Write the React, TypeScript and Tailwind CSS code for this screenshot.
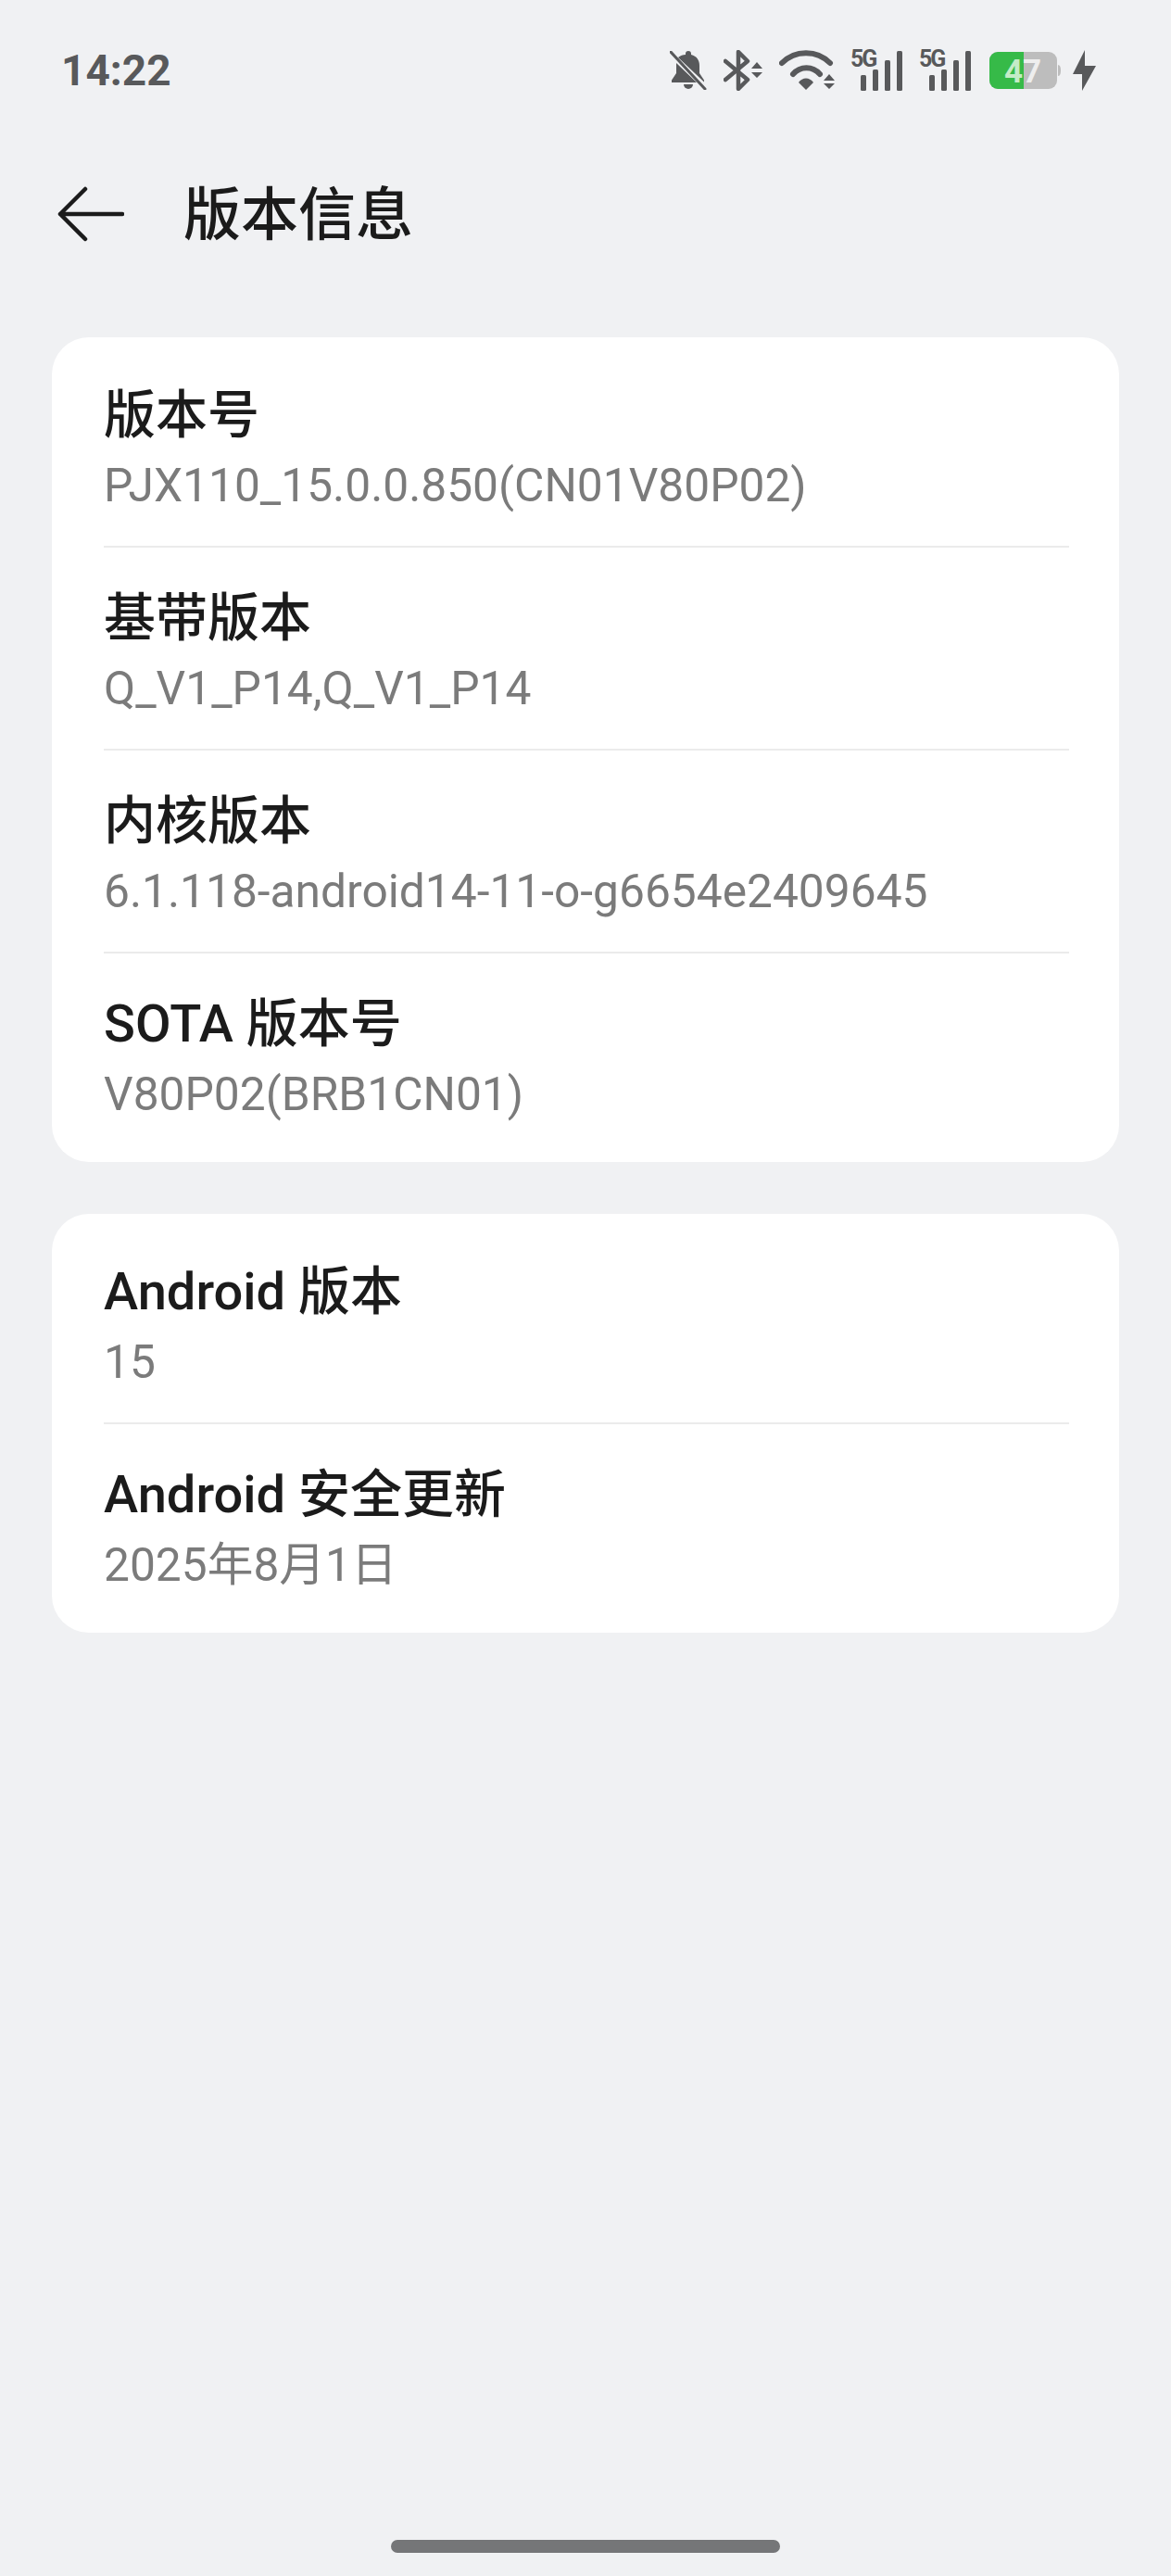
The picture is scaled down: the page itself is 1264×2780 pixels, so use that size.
const font = "font-['Roboto','Noto_Sans_CJK_SC',sans-serif]";

function BellOff() {
  return (
    <svg width="40" height="42" viewBox="0 0 40 42" fill="#58595b">
      <path d="M20 0a3 3 0 0 1 3 3v1c6 1.500 9 6 9 12v8l5 7.500v2L9 7c2.500-2 5-3 8-3V3a3 3 0 0 1 3-3z" />
      <path d="M7 13l22 21H2v-2.500l5-7.500z" />
      <path d="M15 36h10a5 5 0 0 1-10 0z" />
      <path d="M1 1l37 40" stroke="#58595b" strokeWidth="3" strokeLinecap="round" />
    </svg>
  );
}

function Bluetooth() {
  return (
    <svg width="42" height="44" viewBox="0 0 42 44" fill="none">
      <path
        d="M2 12l24 20-10 10V2l10 10L2 32"
        stroke="#58595b"
        strokeWidth="4.500"
        strokeLinejoin="round"
        strokeLinecap="round"
      />
      <path d="M36 13l6 7H30zM30 24h12l-6 6z" fill="#58595b" />
    </svg>
  );
}

function Wifi() {
  return (
    <svg width="60" height="44" viewBox="0 0 60 44" fill="none">
      <path d="M3 14c14-14.500 38-14.500 52 0" stroke="#58595b" strokeWidth="6" strokeLinecap="round" />
      <path d="M15 26c8-9 21-9 29 0" stroke="#58595b" strokeWidth="6" strokeLinecap="round" />
      <path d="M21 35c4-6 12-6 16 0l-8 8z" fill="#58595b" />
      <path d="M54 26l6 7H48zM48 36h12l-6 6z" fill="#58595b" />
    </svg>
  );
}

function Signal5G() {
  return (
    <svg width="56" height="44" viewBox="0 0 56 44" className="overflow-visible">
      <text
        x="0"
        y="18"
        fontFamily="Roboto, sans-serif"
        fontWeight="700"
        fontSize="25"
        letterSpacing="-2"
        fill="#58595b"
      >
        5G
      </text>
      <rect x="11" y="27" width="6" height="17" rx="1.500" fill="#58595b" />
      <rect x="24" y="21" width="6" height="23" rx="1.500" fill="#58595b" />
      <rect x="37" y="11" width="6" height="33" rx="1.500" fill="#58595b" />
      <rect x="50" y="1" width="6" height="43" rx="1.500" fill="#58595b" />
    </svg>
  );
}

function Battery() {
  return (
    <svg width="77" height="40" viewBox="0 0 77 40" className="overflow-visible">
      <defs>
        <clipPath id="leftPart">
          <rect x="0" y="0" width="37" height="40" />
        </clipPath>
        <clipPath id="rightPart">
          <rect x="37" y="0" width="40" height="40" />
        </clipPath>
      </defs>
      <rect x="0" y="0" width="73" height="40" rx="9" fill="#bdbdbd" />
      <rect x="0" y="0" width="73" height="40" rx="9" fill="#36ba48" clipPath="url(#leftPart)" />
      <path d="M74 14c2 0 3 2 3 6s-1 6-3 6z" fill="#bdbdbd" />
      <text
        x="16"
        y="33"
        fontFamily="Roboto, sans-serif"
        fontWeight="700"
        fontSize="35"
        fill="#c4ecc6"
        clipPath="url(#leftPart)"
      >
        47
      </text>
      <text
        x="16"
        y="33"
        fontFamily="Roboto, sans-serif"
        fontWeight="700"
        fontSize="35"
        fill="#eeeeee"
        clipPath="url(#rightPart)"
      >
        47
      </text>
    </svg>
  );
}

function Bolt() {
  return (
    <svg width="25" height="44" viewBox="0 0 25 44" fill="#58595b">
      <path d="M13 0v17h12L10 44v-18H0z" />
    </svg>
  );
}

function InfoRow({ title, value, last }: { title: string; value: string; last?: boolean }) {
  return (
    <>
      <div className="pt-[37px] pb-[28px] px-[56px]">
        <div className="text-[56px] leading-[76px] font-medium text-[#1b1b1b] pt-[1px] -mb-[1px]">{title}</div>
        <div className="text-[49.7px] leading-[76px] text-[#7b7b7b] pt-[1px] -mb-[1px]">{value}</div>
      </div>
      {!last && <div className="h-[2px] bg-[#ebebeb] ml-[56px] mr-[54px]" />}
    </>
  );
}

export default function App() {
  return (
    <div className={`${font} w-[1264px] h-[2780px] bg-[#f0f1f3] flex flex-col`}>
      {/* status bar */}
      <div className="h-[150px] flex items-center pl-[66px] pt-[2px]">
        <div className="text-[46px] font-bold text-[#58595b] leading-none w-[657px]">14:22</div>
        <div className="flex items-center">
          <div className="ml-0"><BellOff /></div>
          <div className="ml-[18px]"><Bluetooth /></div>
          <div className="ml-[18px]"><Wifi /></div>
          <div className="ml-[17px]"><Signal5G /></div>
          <div className="ml-[18px]"><Signal5G /></div>
          <div className="ml-[20px]"><Battery /></div>
          <div className="ml-[13px]"><Bolt /></div>
        </div>
      </div>

      {/* header */}
      <div className="h-[162px] flex items-center pl-[62px]">
        <svg width="72" height="60" viewBox="0 0 72 60" fill="none">
          <path
            d="M70 30H3M30 3L3 30l27 27"
            stroke="#1b1b1b"
            strokeWidth="4.500"
            strokeLinecap="round"
            strokeLinejoin="round"
          />
        </svg>
        <div className="ml-[64px] pt-[4px] text-[62px] font-medium text-[#1b1b1b] leading-none">版本信息</div>
      </div>

      <div className="mt-[52px] mx-[56px] flex flex-col gap-[56px]">
        <div className="bg-white rounded-[40px] py-[8px]">
          <InfoRow title="版本号" value="PJX110_15.0.0.850(CN01V80P02)" />
          <InfoRow title="基带版本" value="Q_V1_P14,Q_V1_P14" />
          <InfoRow title="内核版本" value="6.1.118-android14-11-o-g6654e2409645" />
          <InfoRow title="SOTA 版本号" value="V80P02(BRB1CN01)" last />
        </div>
        <div className="bg-white rounded-[40px] py-[8px]">
          <InfoRow title="Android 版本" value="15" />
          <InfoRow title="Android 安全更新" value="2025年8月1日" last />
        </div>
      </div>

      {/* home indicator */}
      <div className="mt-auto pb-[25px] flex justify-center">
        <div className="w-[420px] h-[14px] rounded-full bg-[#757678]" />
      </div>
    </div>
  );
}
